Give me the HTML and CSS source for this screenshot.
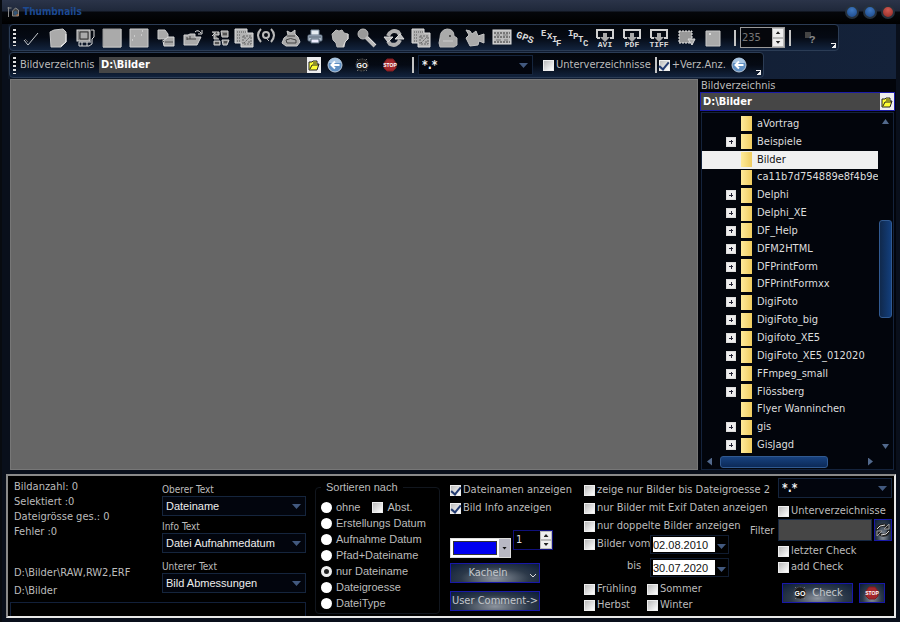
FILE: index.html
```html
<!DOCTYPE html>
<html lang="de">
<head>
<meta charset="utf-8">
<title>Thumbnails</title>
<link rel="stylesheet" href="styles.css">
</head>
<body>
<svg class="defs" aria-hidden="true">
  <defs>
    <symbol id="folder" viewBox="0 0 12 12"><path d="M1 10V3h3l1-1h4v3h2L9 11H1z" fill="#ff3" stroke="#222" stroke-width="1"/><path d="M2 10l2-4h7M5 4h3" fill="none" stroke="#222"/></symbol>
    <symbol id="back" viewBox="0 0 16 16"><circle cx="8" cy="8" r="7" fill="#5f8fc2" stroke="#b9c8d8"/><path d="M2 6a6 5 0 0 1 12 0z" fill="#a9c6e3"/><path d="M12.500 8H4.500M8 4.500L4.500 8 8 11.500" fill="none" stroke="#fff" stroke-width="2"/></symbol>
    <symbol id="go" viewBox="0 0 16 16"><path d="M3 2l2 2M13 2l-2 2M3 14l2-2M13 14l-2-2" stroke="#777"/><circle cx="8" cy="8" r="6" fill="#1c1c1c" stroke="#555" stroke-dasharray="2 1"/><text x="8" y="11" text-anchor="middle" class="go-text">GO</text></symbol>
    <symbol id="stop" viewBox="0 0 16 16"><path d="M5 2h6l3 4v5l-3 3H5l-3-3V6z" fill="#a3272b" stroke="#7c1d20"/><text x="8" y="10" text-anchor="middle" class="stop-text">STOP</text></symbol>
    <symbol id="sheet" viewBox="0 0 20 20"><path d="M1 1h12v4h6v14H7v-4H1z" fill="#b4b4b4" stroke="#ddd"/><path d="M3 4h9M3 7h4M3 10h4M3 13h4" stroke="#555" stroke-dasharray="1 1"/><path d="M9 8h8v8H9zM10 15l6-6M10 10h2M14 14h2" fill="none" stroke="#666" stroke-dasharray="2 1"/></symbol>
    <symbol id="export" viewBox="0 0 20 20"><path d="M2 10V2h16v8h-3M2 10h3" fill="none" stroke="#d0d0d0" stroke-width="2"/><path d="M8 5h4v4h3l-5 5-5-5h3z" fill="#aaa"/></symbol>
  </defs>
</svg>

<header class="titlebar">
  <svg class="app-icon" viewBox="0 0 12 12"><path d="M1 1v10M0 2h4M5 5l3-3 3 2v6H5z" fill="#444" stroke="#888"/><circle cx="8" cy="7" r="2" fill="#357"/><path d="M9 9h2" stroke="#d73"/></svg>
  <h1>Thumbnails</h1>
  <div class="win-buttons">
    <button class="orb" aria-label="Minimieren"></button>
    <button class="orb" aria-label="Maximieren"></button>
    <button class="orb orb-close" aria-label="Schliessen"></button>
  </div>
</header>

<div class="dock">
  <div class="toolbar">
    <span class="grip"></span>
    <button class="tool" aria-label="OK"><svg viewBox="0 0 20 20"><path d="M3 12l4 5L17 5" fill="none" stroke="#c8ccd0"/><path d="M4 11l3 3" stroke="#666"/></svg></button>
    <button class="tool" aria-label="Neu"><svg viewBox="0 0 20 20"><path d="M2 4l4-2 9-1 3 3v10l-5 5H3z" fill="#aaa" stroke="#c8c8c8"/><path d="M18 6v8l-5 4" fill="none" stroke="#eee"/></svg></button>
    <button class="tool" aria-label="Bildschirm"><svg viewBox="0 0 20 20"><rect x="2" y="2" width="13" height="11" fill="#888" stroke="#ddd"/><path d="M5 4h8v7H5z" fill="#aaa" stroke="#333"/><path d="M16 2h3v7l-2 2v5l-3 2H4v-4h12" fill="none" stroke="#d8d8d8"/><path d="M7 14v4M12 14v4" stroke="#ddd"/></svg></button>
    <button class="tool" aria-label="Flaeche"><svg viewBox="0 0 20 20"><path d="M1 1h18v18H1z" fill="#aaa" stroke="#999"/><path d="M1 19h18V1" fill="none" stroke="#ccc"/></svg></button>
    <button class="tool" aria-label="Bild"><svg viewBox="0 0 20 20"><path d="M1 1h18v18H1z" fill="#aaa" stroke="#ccc"/><path d="M5 8h1M13 3h1M12 7h1M3 12h1" stroke="#eee"/></svg></button>
    <button class="tool" aria-label="Kopieren"><svg viewBox="0 0 20 20"><path d="M2 2h7l3 4v5H2z" fill="#aaa" stroke="#ccc"/><path d="M7 13l5-4h6v9H8z" fill="#aaa" stroke="#ddd"/><path d="M9 14h8M5 11l3 3" stroke="#555"/></svg></button>
    <button class="tool" aria-label="Oeffnen"><svg viewBox="0 0 20 20"><path d="M1 17V7h4l2-1h5v3h6l-4 8z" fill="#aaa" stroke="#d4d4d4"/><path d="M4 11h9M4 9v3M7 8v3" stroke="#444"/><path d="M12 4q3-3 6 1M19 2v4h-4" fill="none" stroke="#ddd"/></svg></button>
    <button class="tool" aria-label="Tauschen"><svg viewBox="0 0 20 20"><path d="M2 4h7v3H4v4h5M11 3h7v6h-6zM2 8l3-3M4 13h6v4H4zM12 12h7l-2 5h-4z" fill="#888" stroke="#d4d4d4"/><path d="M6 5h1M13 6h4M5 15h4M14 14h3" stroke="#222"/></svg></button>
    <button class="tool narrow" aria-label="Tabelle"><svg viewBox="0 0 20 20"><use href="#sheet"/></svg></button>
    <button class="tool narrow" aria-label="Senden"><svg viewBox="0 0 20 20"><path d="M5 1Q-1 7 5 14M15 1q6 6 0 13" fill="none" stroke="#b8b8b8" stroke-width="2"/><circle cx="10" cy="7" r="3" fill="none" stroke="#bbb" stroke-width="2"/><path d="M10 10l3 3" stroke="#bbb"/></svg></button>
    <button class="tool" aria-label="Sammlung"><svg viewBox="0 0 20 20"><path d="M7 7l-1-4 4 2 4-3v4l3 3 2 5-3 4H5l-4-3 2-5z" fill="#aaa" stroke="#ccc"/><path d="M6 8h8M5 12q4-3 10 0v3H6z" fill="none" stroke="#444"/></svg></button>
    <button class="tool narrow" aria-label="Drucken"><svg viewBox="0 0 20 20"><path d="M6 2h8v6H6z" fill="#e6edf2" stroke="#789"/><rect x="3" y="7" width="14" height="6" rx="1" fill="#aebbc8" stroke="#69798b"/><path d="M6 11h8v4H6z" fill="#eef" stroke="#567"/><path d="M4 9h12" stroke="#456"/></svg></button>
    <button class="tool" aria-label="Hand"><svg viewBox="0 0 20 20"><path d="M2 6l4-4 3 1 3-1 2 3 4 1v5l-3 3-1 5H7l-1-4-3-3z" fill="#aaa" stroke="#bbb"/><path d="M13 19l2-5 3-3V6" fill="none" stroke="#ddd"/></svg></button>
    <button class="tool" aria-label="Suchen"><svg viewBox="0 0 20 20"><circle cx="6" cy="6" r="5" fill="#999" stroke="#bbb"/><path d="M9 9l9 9" stroke="#bbb" stroke-width="4"/><path d="M11 9l8 8" stroke="#ddd"/></svg></button>
    <button class="tool" aria-label="Drehen"><svg viewBox="0 0 20 20"><path d="M4 8q3-7 10-4l2 3M16 12q-3 7-10 4l-2-3" fill="none" stroke="#b0b0b0" stroke-width="4"/><path d="M0 9h9l-5 5zM20 11h-9l5-5z" fill="#bbb" stroke="#ddd"/></svg></button>
    <button class="tool" aria-label="Auswertung"><svg viewBox="0 0 20 20"><use href="#sheet"/></svg></button>
    <button class="tool" aria-label="Schloss"><svg viewBox="0 0 20 20"><path d="M2 10q0-8 7-9 7 0 7 7l3 2v7l-3 2H2l-1-4z" fill="#aaa" stroke="#bbb"/><circle cx="12" cy="8" r="1" fill="#333"/><path d="M5 13h10" stroke="#ccc"/></svg></button>
    <button class="tool" aria-label="Kamera"><svg viewBox="0 0 20 20"><path d="M1 2l4 1 2 3 4-3 2 5 6-2v9l-5-2-1 4-8 1-2-4-2-4 3-3z" fill="#aaa" stroke="#c4c4c4"/></svg></button>
    <button class="tool" aria-label="Film"><svg viewBox="0 0 20 20"><rect x="1" y="2" width="18" height="14" fill="#bbb" stroke="#ddd"/><path d="M2 5h16M2 9h16M2 14h16" stroke="#333" stroke-dasharray="2 1"/><path d="M4 7h4M11 7h5M4 12h5M12 12h4" stroke="#777"/></svg></button>
    <button class="tool narrow" aria-label="GPS"><svg viewBox="0 0 20 20"><text class="tag big" transform="rotate(22 10 10)" x="0" y="13">GPS</text></svg></button>
    <button class="tool" aria-label="EXIF"><svg viewBox="0 0 20 20"><text class="tag" x="0" y="8">E</text><text class="tag" x="6" y="11">X</text><text class="tag" x="11" y="14">I</text><text class="tag" x="15" y="18">F</text></svg></button>
    <button class="tool" aria-label="IPTC"><svg viewBox="0 0 20 20"><text class="tag" x="0" y="8">I</text><text class="tag" x="5" y="11">P</text><text class="tag" x="10" y="14">T</text><text class="tag" x="15" y="18">C</text></svg></button>
    <button class="tool" aria-label="AVI"><svg viewBox="0 0 20 20"><use href="#export"/><text class="tag small" x="10" y="19" text-anchor="middle">AVI</text></svg></button>
    <button class="tool" aria-label="PDF"><svg viewBox="0 0 20 20"><use href="#export"/><text class="tag small" x="10" y="19" text-anchor="middle">PDF</text></svg></button>
    <button class="tool" aria-label="TIFF"><svg viewBox="0 0 20 20"><use href="#export"/><text class="tag small" x="10" y="19" text-anchor="middle">TIFF</text></svg></button>
    <button class="tool" aria-label="Markieren"><svg viewBox="0 0 20 20"><rect x="3" y="3" width="13" height="12" fill="#999" stroke="#eee" stroke-dasharray="2 1"/><path d="M12 11h7l-3 6z" fill="#aaa" stroke="#ddd"/></svg></button>
    <button class="tool" aria-label="Hintergrund"><svg viewBox="0 0 20 20"><path d="M3 3h14v15H3z" fill="#aaa" stroke="#c8c8c8"/><circle cx="7" cy="6" r="1" fill="#eee"/></svg></button>
    <span class="sep sep-wide"></span>
    <div class="spin spin-big">
      <input type="text" value="235" aria-label="Groesse">
      <span class="spin-keys"><button aria-label="mehr"></button><button aria-label="weniger"></button></span>
    </div>
    <span class="sep"></span>
    <button class="tool help" aria-label="Hilfe"><svg viewBox="0 0 20 20"><path d="M4 4h6v6H4z" fill="#444"/><text x="8" y="15" class="help-mark">?</text></svg></button>
    <span class="more"></span>
  </div>

  <div class="toolbar second">
    <span class="grip"></span>
    <label class="path-label" for="path">Bildverzeichnis</label>
    <div class="path path-top"><input id="path" type="text" value="D:\Bilder"><button aria-label="Ordner waehlen"><svg viewBox="0 0 12 12"><use href="#folder"/></svg></button></div>
    <button class="tool" aria-label="Zurueck"><svg class="s16"><use href="#back"/></svg></button>
    <button class="tool wide" aria-label="Start"><svg class="s16"><use href="#go"/></svg></button>
    <button class="tool wide" aria-label="Stopp"><svg class="s16"><use href="#stop"/></svg></button>
    <span class="sep sep-wide"></span>
    <div class="combo mask"><select aria-label="Maske"><option>*.*</option></select></div>
    <label class="check sub"><input type="checkbox">Unterverzeichnisse</label>
    <span class="sep"></span>
    <label class="check add"><input type="checkbox" checked>+Verz.Anz.</label>
    <button class="tool" aria-label="Anzeigen"><svg class="s16"><use href="#back"/></svg></button>
    <span class="more"></span>
  </div>
</div>

<main class="work">
  <section class="canvas" aria-label="Vorschau"></section>
  <aside class="side">
    <label for="dir">Bildverzeichnis</label>
    <div class="path path-side"><input id="dir" type="text" value="D:\Bilder"><button aria-label="Ordner waehlen"><svg viewBox="0 0 12 12"><use href="#folder"/></svg></button></div>
    <div class="tree-box">
      <ul class="tree">
        <li class="leaf">aVortrag</li>
        <li>Beispiele</li>
        <li class="leaf selected">Bilder</li>
        <li class="leaf">ca11b7d754889e8f4b9e</li>
        <li>Delphi</li>
        <li>Delphi_XE</li>
        <li>DF_Help</li>
        <li>DFM2HTML</li>
        <li>DFPrintForm</li>
        <li>DFPrintFormxx</li>
        <li>DigiFoto</li>
        <li>DigiFoto_big</li>
        <li>Digifoto_XE5</li>
        <li>DigiFoto_XE5_012020</li>
        <li>FFmpeg_small</li>
        <li>Flössberg</li>
        <li class="leaf">Flyer Wanninchen</li>
        <li>gis</li>
        <li>GisJagd</li>
      </ul>
      <div class="vbar"><i class="up"></i><span></span><i class="down"></i></div>
      <div class="hbar"><i class="left"></i><span></span><i class="right"></i></div>
    </div>
  </aside>
</main>

<footer class="panel">
  <section class="info">
    <div class="info-top">
      <div class="stats">
        <p>Bildanzahl: 0</p>
        <p>Selektiert :0</p>
        <p>Dateigrösse ges.: 0</p>
        <p>Fehler :0</p>
        <p class="raw">D:\Bilder\RAW,RW2,ERF</p>
        <p class="dir">D:\Bilder</p>
      </div>
      <div class="texts">
        <label for="t1">Oberer Text</label>
        <div class="combo"><select id="t1"><option>Dateiname</option></select></div>
        <label for="t2">Info Text</label>
        <div class="combo"><select id="t2"><option>Datei Aufnahmedatum</option></select></div>
        <label for="t3" class="last">Unterer Text</label>
        <div class="combo"><select id="t3"><option>Bild Abmessungen</option></select></div>
      </div>
    </div>
    <div class="progress"></div>
  </section>

  <fieldset class="sort">
    <legend>Sortieren nach</legend>
    <div class="sort-first">
      <label class="radio"><input type="radio" name="sort">ohne</label>
      <label class="check"><input type="checkbox">Abst.</label>
    </div>
    <label class="radio"><input type="radio" name="sort">Erstellungs Datum</label>
    <label class="radio"><input type="radio" name="sort">Aufnahme Datum</label>
    <label class="radio"><input type="radio" name="sort">Pfad+Dateiname</label>
    <label class="radio"><input type="radio" name="sort" checked>nur Dateiname</label>
    <label class="radio"><input type="radio" name="sort">Dateigroesse</label>
    <label class="radio"><input type="radio" name="sort">DateiType</label>
  </fieldset>

  <section class="view">
    <label class="check"><input type="checkbox" checked>Dateinamen anzeigen</label>
    <label class="check"><input type="checkbox" checked>Bild Info anzeigen</label>
    <div class="colour-row">
      <button class="colour" aria-label="Farbe"><span class="swatch"></span><span class="drop"></span></button>
      <div class="spin spin-small">
        <input type="text" value="1" aria-label="Rahmen">
        <span class="spin-keys"><button aria-label="mehr"></button><button aria-label="weniger"></button></span>
      </div>
    </div>
    <button class="btn tiles">Kacheln<svg viewBox="0 0 8 6"><path d="M1 1l3 3 3-3" fill="none" stroke="#ddd"/></svg></button>
    <button class="btn comment">User Comment-&gt;</button>
  </section>

  <section class="limits">
    <label class="check"><input type="checkbox">zeige nur Bilder bis Dateigroesse 2</label>
    <label class="check"><input type="checkbox">nur Bilder mit Exif Daten anzeigen</label>
    <label class="check"><input type="checkbox">nur doppelte Bilder anzeigen</label>
    <div class="dates">
      <label class="check"><input type="checkbox">Bilder vom</label>
      <div class="date"><input type="text" value="02.08.2010" aria-label="Datum von"></div>
      <label class="until" for="until">bis</label>
      <div class="date"><input type="text" id="until" value="30.07.2020"></div>
    </div>
    <div class="seasons">
      <label class="check"><input type="checkbox">Frühling</label>
      <label class="check"><input type="checkbox">Sommer</label>
      <label class="check"><input type="checkbox">Herbst</label>
      <label class="check"><input type="checkbox">Winter</label>
    </div>
  </section>

  <section class="filter">
    <div class="combo"><select aria-label="Dateimaske"><option>*.*</option></select></div>
    <label class="check"><input type="checkbox">Unterverzeichnisse</label>
    <label class="filter-label" for="filter">Filter</label>
    <div class="filter-row"><input type="text" id="filter"><button class="btn" aria-label="Aktualisieren"><svg viewBox="0 0 16 16"><path d="M2 8q1-5 7-5l4 2M14 8q-1 6-7 5l-4-2" fill="none" stroke="#222" stroke-width="3"/><path d="M2 7q2-4 8-4M14 9q-2 4-8 4" fill="none" stroke="#ddd"/><path d="M14 2v5H9zM2 14V9h5z" fill="#222" stroke="#999"/></svg></button></div>
    <label class="check"><input type="checkbox">letzter Check</label>
    <label class="check"><input type="checkbox">add Check</label>
    <div class="actions">
      <button class="btn run"><svg class="s16"><use href="#go"/></svg>Check</button>
      <button class="btn halt" aria-label="Stopp"><svg class="s16"><use href="#stop"/></svg></button>
    </div>
  </section>
</footer>
</body>
</html>
```
FILE: styles.css
```css
* { box-sizing: border-box; }

body {
  margin: 0;
  min-height: 100vh;
  display: flex;
  flex-direction: column;
  padding: 0 4px 4px 6px;
  background: #090f1b;
  border-left: 2px solid #080b10;
  color: #bcbcbc;
  font: 11px/16px "DejaVu Sans Condensed", "DejaVu Sans", sans-serif;
  white-space: nowrap;
}

button, input, select {
  appearance: none;
  margin: 0;
  padding: 0;
  border: 0;
  border-radius: 0;
  background: none;
  color: inherit;
  font: inherit;
}

p, h1, ul { margin: 0; padding: 0; }
svg { display: block; }
.defs { position: absolute; width: 0; height: 0; }
.s16 { width: 16px; height: 16px; }
.go-text { font: bold 7px "Liberation Sans", sans-serif; fill: #fff; }
.stop-text { font: bold 5px "Liberation Sans", sans-serif; fill: #fff; }

/* title bar */
.titlebar {
  display: flex;
  align-items: center;
  height: 24px;
  margin: 0 -4px 0 -8px;
  padding: 0 5px 0 7px;
  background: linear-gradient(#2b3449, #1f283a 11px, #05070b 12px, #000);
}
.app-icon { width: 13px; height: 12px; }
.titlebar h1 { margin-left: 3px; font-size: 10px; color: #1d4a92; }
.win-buttons { display: flex; gap: 4px; margin-left: auto; }
.orb {
  width: 14px;
  height: 14px;
  border: 2px solid #26313d;
  border-radius: 50%;
  background: radial-gradient(circle at 50% 30%, #3f78c0, #1a4687);
}
.orb-close { background: radial-gradient(circle at 50% 30%, #d05a52, #8e2722); }

/* toolbars */
.dock {
  display: flex;
  flex-direction: column;
  align-items: flex-start;
  gap: 1px;
  padding: 0 0 1px 1px;
  background: linear-gradient(90deg, #0d1624, #14223a);
}
.toolbar {
  display: flex;
  align-items: center;
  height: 27px;
  padding-left: 3px;
  border: 1px solid #2b3c55;
  border-radius: 4px;
  background: linear-gradient(#03060b, #050a14 50%, #12233d);
}
.toolbar.second { height: 26px; }
.grip {
  width: 3px;
  height: 17px;
  margin-right: 1px;
  background: repeating-linear-gradient(#ddd 0 2px, transparent 2px 4px);
}
.tool {
  display: flex;
  justify-content: center;
  width: 27px;
}
.tool svg { width: 20px; height: 20px; overflow: visible; }
.tool .s16 { width: 16px; height: 16px; }
.tool.narrow { width: 22px; }
.tool.wide { width: 28px; }
.tag { font: bold 9px "Liberation Mono", monospace; fill: #d8d8d8; }
.tag.big { font-size: 10px; }
.tag.small { font-size: 8px; }
.tool.help { width: 24px; margin: 0 5px 0 4px; }
.help-mark { font: bold 11px "Liberation Mono", monospace; fill: #888; }
.sep { width: 2px; height: 16px; margin: 0 4px; background: #c4c4c4; }
.sep-wide { margin-left: 8px; }
.more {
  align-self: flex-end;
  width: 5px;
  height: 5px;
  margin: 0 2px 2px 3px;
  border-top: 1px solid #eee;
  background: linear-gradient(135deg, transparent 50%, #eee 50%);
}

.spin { display: flex; }
.spin input { width: 100%; min-width: 0; }
.spin-keys { display: flex; flex-direction: column; background: #eee; }
.spin-keys button {
  display: flex;
  flex: 1;
  width: 12px;
  align-items: center;
  justify-content: center;
  border: 1px solid #bbb;
}
.spin-keys button::before {
  content: "";
  width: 5px;
  height: 3px;
  background: #222;
  clip-path: polygon(50% 0, 100% 100%, 0 100%);
}
.spin-keys button + button::before { clip-path: polygon(0 0, 100% 0, 50% 100%); }
.spin-big {
  width: 45px;
  height: 21px;
  border: 1px solid #999;
  background: #05070c;
  color: #777;
}
.spin-big input { padding-left: 1px; }

/* path boxes */
.path-label { flex: none; width: 82px; padding-left: 3px; }
.path { display: flex; background: #464646; color: #fff; font-weight: bold; }
.path input { flex: 1; min-width: 0; padding-left: 2px; }
.path button {
  display: flex;
  align-items: center;
  justify-content: center;
  width: 14px;
  background: #eee;
}
.path svg { width: 12px; height: 12px; }
.path-top { width: 222px; height: 16px; }

/* combo boxes */
.combo { position: relative; display: flex; }
.combo select {
  width: 100%;
  min-width: 0;
  height: 20px;
  padding: 0 18px 0 3px;
  border: 1px solid #15253d;
  background: #02050d;
  color: #eee;
  font: 11px "Liberation Sans", sans-serif;
}
.combo::after, .date::after {
  content: "";
  position: absolute;
  top: 8px;
  right: 5px;
  width: 9px;
  height: 5px;
  background: #42597f;
  clip-path: polygon(0 0, 100% 0, 50% 100%);
  pointer-events: none;
}
.mask { width: 115px; }
.mask select, .filter select { font: bold 12px "DejaVu Sans Condensed", sans-serif; }

/* tick boxes and radios */
.check, .radio { display: flex; align-items: center; gap: 2px; }
.check input {
  flex: none;
  display: flex;
  align-items: center;
  justify-content: center;
  width: 11px;
  height: 11px;
  border: 1px solid #eee;
  background: linear-gradient(135deg, #bbb, #fff);
}
.check input:checked::before {
  content: "";
  width: 4px;
  height: 8px;
  border: solid #223a70;
  border-width: 0 2px 2px 0;
  transform: rotate(40deg);
}
.radio { gap: 4px; }
.radio input {
  flex: none;
  width: 11px;
  height: 11px;
  border-radius: 50%;
  background: #fff;
}
.radio input:checked { border: 3px solid #eee; background: #222; }
.sub { padding-left: 10px; }
.add { margin-left: -2px; }

/* work area */
.work { display: flex; flex: 1; padding-left: 2px; }
.canvas { flex: 1; background: #666; border: 1px solid #777; }
.side {
  display: flex;
  flex-direction: column;
  width: 198px;
  padding: 0 2px 0 3px;
  background: #02040a;
}
.side > label { height: 14px; line-height: 14px; }
.path-side { height: 17px; outline: 1px solid #1b1ba8; }
.tree-box {
  flex: 1;
  display: grid;
  grid-template: 1fr 15px / 1fr 15px;
  margin-top: 2px;
  border: 1px solid #14233c;
  background: #02050c;
}
.tree {
  display: grid;
  grid-auto-rows: 1fr;
  min-width: 0;
  padding-top: 2px;
  overflow: hidden;
  list-style: none;
  color: #ddd;
}
.tree li {
  display: flex;
  align-items: center;
  padding-left: 24px;
  text-indent: 14px;
  background: linear-gradient(90deg, #ffeb9a, #f0cd60) 39px 50% / 11px 15px no-repeat;
}
.tree li::before {
  content: "";
  flex: none;
  width: 8px;
  height: 8px;
  margin-right: 7px;
  border: 1px solid #ddd;
  background:
    linear-gradient(#223, #223) center / 4px 1px no-repeat,
    linear-gradient(#223, #223) center / 1px 4px no-repeat,
    #eee;
}
.tree li.leaf::before { visibility: hidden; }
.tree li.selected { background-color: #f0f0f0; color: #111; }
.vbar, .hbar { display: flex; align-items: center; }
.vbar { flex-direction: column; padding: 6px 0 5px; }
.vbar span, .hbar span {
  border: 1px solid #315a91;
  border-radius: 3px;
  background: linear-gradient(90deg, #10294c, #123e7c);
}
.vbar span { width: 13px; height: 98px; margin: 96px 0 auto; }
.hbar { padding: 0 5px; }
.hbar span { width: 108px; height: 12px; margin: 0 auto 0 8px; background: linear-gradient(#17417e, #0c2a58); }
.vbar i, .hbar i { width: 7px; height: 5px; background: #52698c; }
.hbar i { width: 5px; height: 8px; }
.up { clip-path: polygon(50% 0, 100% 100%, 0 100%); }
.down { clip-path: polygon(0 0, 100% 0, 50% 100%); }
.left { clip-path: polygon(0 50%, 100% 0, 100% 100%); }
.right { clip-path: polygon(0 0, 100% 50%, 0 100%); }

/* lower panel */
.panel {
  display: grid;
  grid-template-columns: 302fr 138fr 134fr 168fr 144fr;
  height: 144px;
  margin: 4px 0 0 -2px;
  border: 2px solid;
  border-color: #8a8a8a #e8e8e8 #e8e8e8 #8a8a8a;
  background: #000;
}
.panel > * { min-width: 0; }
.info { display: flex; flex-direction: column; padding: 3px 4px 0 2px; }
.info-top { display: flex; flex: 1; }
.stats { flex: 1; padding-left: 4px; line-height: 15px; }
.stats .raw { margin-top: 26px; }
.stats .dir { margin-top: 3px; }
.texts { width: 144px; padding-top: 6px; font-size: 10px; line-height: 10px; }
.texts label { display: block; margin-bottom: 1px; }
.texts .combo { margin-bottom: 6px; }
.texts .last { padding-top: 3px; }
.progress { height: 14px; border: 1px solid #12203a; border-bottom: 0; }

.sort {
  display: flex;
  flex-direction: column;
  margin: 4px 8px 2px 5px;
  padding: 5px 5px 0;
  border: 1px solid #11161e;
  border-radius: 4px;
  font: 11px/16px "Liberation Sans", sans-serif;
}
.sort legend { padding: 0 5px; line-height: 14px; }
.sort-first { display: flex; gap: 12px; }
.sort .check { gap: 4px; }

.view { padding: 5px 0 0 2px; }
.view .check { height: 18px; }
.colour-row { display: flex; align-items: flex-end; gap: 2px; height: 41px; }
.colour { display: flex; width: 61px; height: 20px; border: 1px solid #ddd; background: #fff; }
.swatch { flex: 1; margin: 2px; border: 1px solid #333; background: #0000f0; }
.drop {
  display: flex;
  align-items: center;
  justify-content: center;
  width: 11px;
  background: #b8b8c4;
}
.drop::before {
  content: "";
  width: 5px;
  height: 3px;
  background: #111;
  clip-path: polygon(0 0, 100% 0, 50% 100%);
}
.spin-small {
  align-self: flex-start;
  width: 40px;
  height: 20px;
  margin-top: 13px;
  border: 1px solid #10107c;
  color: #ddd;
}
.spin-small input { padding-left: 2px; }
.btn {
  display: flex;
  align-items: center;
  justify-content: center;
  height: 20px;
  border: 1px solid #1818a8;
  background: radial-gradient(ellipse at 50% 80%, #8c939d, #2c3949 55%, #0b1c38);
  color: #c4c8cc;
}
.tiles { position: relative; width: 90px; margin-top: 5px; padding-right: 14px; }
.tiles svg { position: absolute; right: 2px; bottom: 3px; width: 8px; height: 6px; }
.comment { width: 90px; margin-top: 8px; }

.limits { padding: 5px 0 0 2px; }
.limits > .check { height: 18px; }
.dates {
  display: grid;
  grid-template-columns: 66px 79px;
  grid-auto-rows: 23px;
  align-items: start;
}
.dates .check { height: 18px; }
.until { padding-left: 43px; }
.date {
  position: relative;
  height: 19px;
  padding: 1px 13px 1px 2px;
  border: 1px solid #101c30;
}
.date input {
  display: block;
  width: 100%;
  height: 15px;
  background: #fff;
  color: #111;
  font: 11px "Liberation Sans", sans-serif;
}
.date::after { right: 2px; }
.seasons { display: grid; grid-template-columns: 63px 80px; }

.filter {
  display: grid;
  grid-template-columns: 28px minmax(0, 1fr);
  grid-template-rows: 25px 16px 24px 16px 16px 1fr;
  padding: 2px 2px 0 0;
}
.filter > * { grid-column: 2; }
.filter > .filter-label { grid-area: 3 / 1; align-self: center; }
.filter-row { grid-row: 3; display: flex; gap: 2px; height: 22px; }
.filter-row input { flex: 1; min-width: 0; border: 1px solid #162742; background: #464646; }
.filter-row .btn { width: 18px; height: 22px; }
.filter-row svg { width: 16px; height: 16px; }
.actions { display: flex; gap: 6px; padding: 8px 0 0 4px; }
.run { width: 71px; gap: 4px; }
.halt { width: 26px; }
```
